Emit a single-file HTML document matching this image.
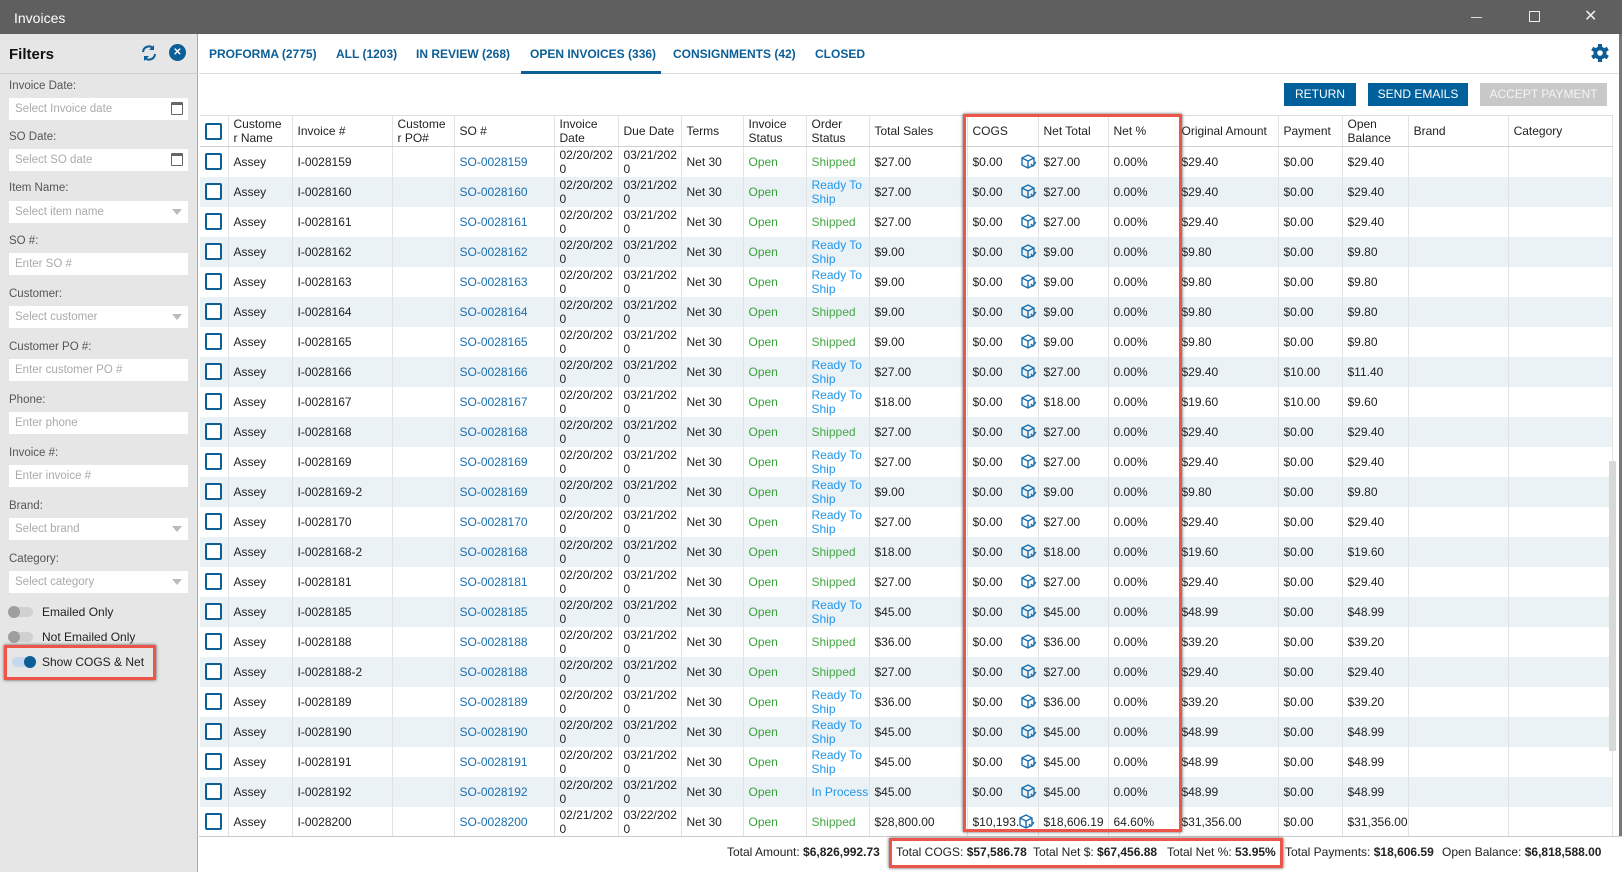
<!DOCTYPE html>
<html><head><meta charset="utf-8"><style>
*{box-sizing:border-box;margin:0;padding:0}
body{width:1622px;height:872px;overflow:hidden;font-family:"Liberation Sans",sans-serif;font-size:12px;color:#222;background:#fff;position:relative}
.title{position:absolute;left:0;top:0;width:1622px;height:34px;background:#5f5f5f;color:#fff;font-size:14px}
.title span{position:absolute;left:14px;top:10px}
.side{position:absolute;left:0;top:34px;width:198px;height:838px;background:#e6e6e6;border-right:1px solid #a8a8a8}
.side h1{position:absolute;left:9px;top:12px;font-size:15px;font-weight:bold;color:#111}
.side .hl{position:absolute;left:0;top:39px;width:198px;border-top:1px solid #ccc}
.lbl{position:absolute;left:9px;font-size:11.5px;color:#555}
.inp{position:absolute;left:9px;width:179px;height:22px;background:#fff;color:#aaa;font-size:11.5px;padding:5px 6px}
.inp .ar{position:absolute;right:6px;top:8px;width:0;height:0;border-left:5px solid transparent;border-right:5px solid transparent;border-top:6px solid #bbb}
.inp .cal{position:absolute;right:5px;top:4px;width:12px;height:13px;border:1.5px solid #666;border-top-width:3px;border-radius:1px}
.tg{position:absolute;left:9px;width:24px;height:10px;border-radius:5px;background:#d0d0d0}
.tg i{position:absolute;left:-1px;top:-1px;width:12px;height:12px;border-radius:6px;background:#9e9e9e}
.tgl{position:absolute;left:42px;font-size:12px;color:#222}
.tabs{position:absolute;left:199px;top:34px;width:1423px;height:40px;border-bottom:1px solid #ddd}
.tab{position:absolute;top:13px;color:#0b5e96;font-weight:bold;font-size:12px}
.btn{position:absolute;top:83px;height:23px;background:#00609c;color:#fff;font-size:12px;text-align:center;line-height:23px}
table{position:absolute;left:200px;top:115px;border-collapse:collapse;table-layout:fixed}
td,th{border-right:1px solid #e2e2e2;font-weight:normal;text-align:left;padding:0 0 0 5px;height:30px;white-space:nowrap;overflow:hidden;line-height:14px;vertical-align:middle}
th{height:31px;border-bottom:1px solid #d0d0d0;border-top:1px solid #ddd;line-height:14px}
#b tr:nth-child(even) td{background:#ebf2f6}
.cb{display:inline-block;width:17px;height:17px;border:2px solid #0b5e96;border-radius:2px;background:#fff;vertical-align:middle}
.ln{color:#1a6faf}.op{color:#3aa03a}.sh{color:#43a843}.rd{color:#2196e8}
.ic{display:inline-block;vertical-align:-3px;margin-left:18px}
.rb{position:absolute;border:3px solid #ec5648;box-shadow:0 0 3px #555}
.foot{position:absolute;left:199px;top:836px;width:1423px;height:36px;border-top:1px solid #ccc;background:#fff;font-size:12px}
.foot span{position:absolute;top:8px}
.foot b{font-weight:bold}
</style></head><body>
<div class="title"><span>Invoices</span>
<div style="position:absolute;left:1471px;top:17px;width:11px;border-top:1px solid #ddd"></div>
<div style="position:absolute;left:1529px;top:11px;width:11px;height:11px;border:1px solid #eee"></div>
<div style="position:absolute;left:1584px;top:6px;color:#eee;font-size:16px">✕</div>
</div>
<div class="side">
<h1>Filters</h1>
<svg style="position:absolute;left:140px;top:10px" width="18" height="18" viewBox="0 0 18 18"><path d="M3 8a6 6 0 0 1 10.5-3.5M15 10a6 6 0 0 1-10.5 3.5" fill="none" stroke="#0b5e96" stroke-width="2"/><path d="M14 1v5h-5zM4 17v-5h5z" fill="#0b5e96"/></svg>
<div style="position:absolute;left:169px;top:10px;width:17px;height:17px;border-radius:9px;background:#0b5e96;color:#fff;font-size:10px;text-align:center;line-height:17px;font-weight:bold">✕</div>
<div class="hl"></div>
<div class="lbl" style="top:46px">Invoice Date:</div><div class="inp" style="top:64px">Select Invoice date<i class="cal"></i></div>
<div class="lbl" style="top:97px">SO Date:</div><div class="inp" style="top:115px">Select SO date<i class="cal"></i></div>
<div class="lbl" style="top:148px">Item Name:</div><div class="inp" style="top:167px">Select item name<i class="ar"></i></div>
<div class="lbl" style="top:201px">SO #:</div><div class="inp" style="top:219px">Enter SO #</div>
<div class="lbl" style="top:254px">Customer:</div><div class="inp" style="top:272px">Select customer<i class="ar"></i></div>
<div class="lbl" style="top:307px">Customer PO #:</div><div class="inp" style="top:325px">Enter customer PO #</div>
<div class="lbl" style="top:360px">Phone:</div><div class="inp" style="top:378px">Enter phone</div>
<div class="lbl" style="top:413px">Invoice #:</div><div class="inp" style="top:431px">Enter invoice #</div>
<div class="lbl" style="top:466px">Brand:</div><div class="inp" style="top:484px">Select brand<i class="ar"></i></div>
<div class="lbl" style="top:519px">Category:</div><div class="inp" style="top:537px">Select category<i class="ar"></i></div>
<div class="tg" style="top:573px"><i></i></div><div class="tgl" style="top:571px">Emailed Only</div>
<div class="tg" style="top:598px"><i></i></div><div class="tgl" style="top:596px">Not Emailed Only</div>
<div class="tg" style="top:623px;background:#c5d8f0;left:12px"><i style="left:12px;background:#0b5e96"></i></div><div class="tgl" style="top:621px">Show COGS &amp; Net</div>
</div>
<div class="rb" style="left:4px;top:645px;width:152px;height:35px"></div>
<div class="tabs">
<span class="tab" style="left:10px">PROFORMA (2775)</span>
<span class="tab" style="left:137px">ALL (1203)</span>
<span class="tab" style="left:217px">IN REVIEW (268)</span>
<span class="tab" style="left:331px">OPEN INVOICES (336)</span>
<span class="tab" style="left:474px">CONSIGNMENTS (42)</span>
<span class="tab" style="left:616px">CLOSED</span>
<div style="position:absolute;left:322px;top:37px;width:140px;height:3px;background:#0b5e96"></div>
<svg style="position:absolute;left:1391px;top:9px" width="20" height="20" viewBox="0 0 20 20"><g fill="#0b5e96"><circle cx="10" cy="10" r="6.5"/><rect x="8" y="1" width="4" height="18"/><rect x="8" y="1" width="4" height="18" transform="rotate(60 10 10)"/><rect x="8" y="1" width="4" height="18" transform="rotate(120 10 10)"/></g><circle cx="10" cy="10" r="2.8" fill="#fff"/></svg>
</div>
<div class="btn" style="left:1284px;width:72px">RETURN</div>
<div class="btn" style="left:1368px;width:100px">SEND EMAILS</div>
<div class="btn" style="left:1480px;width:127px;background:#c8c8c8;color:#f4f4f4">ACCEPT PAYMENT</div>
<table>
<colgroup><col style="width:28px"><col style="width:64px"><col style="width:100px"><col style="width:62px"><col style="width:100px"><col style="width:64px"><col style="width:63px"><col style="width:62px"><col style="width:63px"><col style="width:63px"><col style="width:98px"><col style="width:71px"><col style="width:70px"><col style="width:71px"><col style="width:99px"><col style="width:64px"><col style="width:63px"><col style="width:100px"><col style="width:104px"></colgroup>
<thead><tr><th><span class="cb"></span></th><th>Custome<br>r Name</th><th>Invoice #</th><th>Custome<br>r PO#</th><th>SO #</th><th>Invoice<br>Date</th><th>Due Date</th><th>Terms</th><th>Invoice<br>Status</th><th>Order<br>Status</th><th>Total Sales</th><th>COGS</th><th>Net Total</th><th>Net %</th><th style="padding-left:2px">Original Amount</th><th>Payment</th><th>Open<br>Balance</th><th>Brand</th><th>Category</th></tr></thead>
<tbody id="b">
<tr><td><span class="cb"></span></td><td>Assey</td><td>I-0028159</td><td></td><td class="ln">SO-0028159</td><td>02/20/202<br>0</td><td>03/21/202<br>0</td><td>Net 30</td><td class="op">Open</td><td class="sh">Shipped</td><td>$27.00</td><td>$0.00</td><td>$27.00</td><td>0.00%</td><td style="padding-left:2px">$29.40</td><td>$0.00</td><td>$29.40</td><td></td><td></td></tr>
</tbody></table>
<div class="rb" style="left:963px;top:114px;width:219px;height:718px"></div>
<div style="position:absolute;left:1609px;top:461px;width:7px;height:290px;background:#d8d8d8"></div>
<div style="position:absolute;left:1619px;top:34px;width:3px;height:838px;background:#777"></div>
<div class="foot">
<span style="left:528px">Total Amount: <b>$6,826,992.73</b></span>
<span style="left:697px">Total COGS: <b>$57,586.78</b></span>
<span style="left:834px">Total Net $: <b>$67,456.88</b></span>
<span style="left:968px">Total Net %: <b>53.95%</b></span>
<span style="left:1086px">Total Payments: <b>$18,606.59</b></span>
<span style="left:1243px">Open Balance: <b>$6,818,588.00</b></span>
</div>
<div class="rb" style="left:889px;top:838px;width:394px;height:30px"></div>
<script>
var d=[["I-0028159","SO-0028159",0,"27.00","27.00","29.40","0.00","29.40"],
["I-0028160","SO-0028160",1,"27.00","27.00","29.40","0.00","29.40"],
["I-0028161","SO-0028161",0,"27.00","27.00","29.40","0.00","29.40"],
["I-0028162","SO-0028162",1,"9.00","9.00","9.80","0.00","9.80"],
["I-0028163","SO-0028163",1,"9.00","9.00","9.80","0.00","9.80"],
["I-0028164","SO-0028164",0,"9.00","9.00","9.80","0.00","9.80"],
["I-0028165","SO-0028165",0,"9.00","9.00","9.80","0.00","9.80"],
["I-0028166","SO-0028166",1,"27.00","27.00","29.40","10.00","11.40"],
["I-0028167","SO-0028167",1,"18.00","18.00","19.60","10.00","9.60"],
["I-0028168","SO-0028168",0,"27.00","27.00","29.40","0.00","29.40"],
["I-0028169","SO-0028169",1,"27.00","27.00","29.40","0.00","29.40"],
["I-0028169-2","SO-0028169",1,"9.00","9.00","9.80","0.00","9.80"],
["I-0028170","SO-0028170",1,"27.00","27.00","29.40","0.00","29.40"],
["I-0028168-2","SO-0028168",0,"18.00","18.00","19.60","0.00","19.60"],
["I-0028181","SO-0028181",0,"27.00","27.00","29.40","0.00","29.40"],
["I-0028185","SO-0028185",1,"45.00","45.00","48.99","0.00","48.99"],
["I-0028188","SO-0028188",0,"36.00","36.00","39.20","0.00","39.20"],
["I-0028188-2","SO-0028188",0,"27.00","27.00","29.40","0.00","29.40"],
["I-0028189","SO-0028189",1,"36.00","36.00","39.20","0.00","39.20"],
["I-0028190","SO-0028190",1,"45.00","45.00","48.99","0.00","48.99"],
["I-0028191","SO-0028191",1,"45.00","45.00","48.99","0.00","48.99"],
["I-0028192","SO-0028192",2,"45.00","45.00","48.99","0.00","48.99"],
["I-0028200","SO-0028200",0,"28,800.00","18,606.19","31,356.00","0.00","31,356.00"]];
var ic='<svg class="ic" width="16" height="15" viewBox="0 0 16 15"><path d="M1 4l6-3 6 3v7l-6 3-6-3zM1 4l6 3 6-3M7 7v7M10 10l2 2 3-4" fill="none" stroke="#1a6faf" stroke-width="1.4"/></svg>';
var h='';
d.forEach(function(r,i){var last=i==22;var st=r[2]==0?'<td class="sh">Shipped</td>':r[2]==1?'<td class="rd">Ready To<br>Ship</td>':'<td class="rd">In Process</td>';
h+='<tr><td><span class="cb"></span></td><td>Assey</td><td>'+r[0]+'</td><td></td><td class="ln">'+r[1]+'</td><td>'+(last?'02/21/202':'02/20/202')+'<br>0</td><td>'+(last?'03/22/202':'03/21/202')+'<br>0</td><td>Net 30</td><td class="op">Open</td>'+st+'<td>$'+r[3]+'</td><td>'+(last?'$10,193.':'$0.00')+(last?ic.replace('class="ic"','class="ic" style="margin-left:0"'):ic)+'</td><td>$'+r[4]+'</td><td>'+(last?'64.60%':'0.00%')+'</td><td style="padding-left:2px">$'+r[5]+'</td><td>$'+r[6]+'</td><td>$'+r[7]+'</td><td></td><td></td></tr>';});
document.getElementById('b').innerHTML=h;
</script>
</body></html>
